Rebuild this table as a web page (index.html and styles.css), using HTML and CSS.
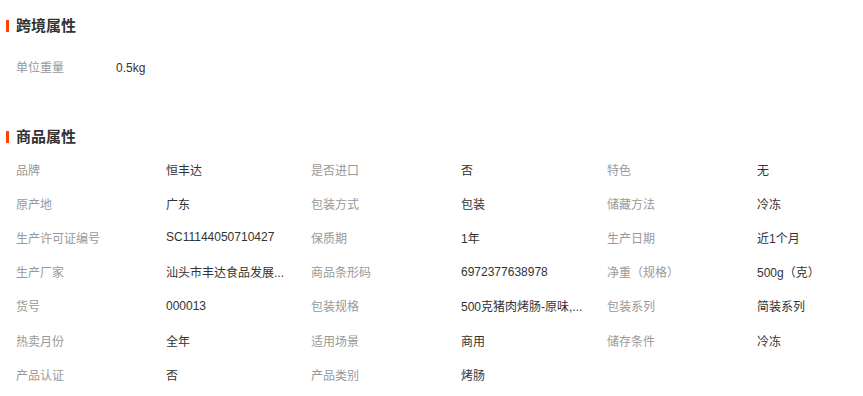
FILE: index.html
```html
<!DOCTYPE html>
<html lang="zh-CN">
<head>
<meta charset="utf-8">
<title>属性</title>
<link rel="stylesheet" href="styles.css">
</head>
<body>
<div class="page">
  <section class="block block-cross">
    <h2 class="title">跨境属性</h2>
    <div class="single-row">
      <span class="label">单位重量</span>
      <span class="value">0.5kg</span>
    </div>
  </section>
  <section class="block block-goods">
    <h2 class="title">商品属性</h2>
    <div class="attr-grid">
      <span class="label">品牌</span><span class="value">恒丰达</span>
      <span class="label">是否进口</span><span class="value">否</span>
      <span class="label">特色</span><span class="value">无</span>

      <span class="label">原产地</span><span class="value">广东</span>
      <span class="label">包装方式</span><span class="value">包装</span>
      <span class="label">储藏方法</span><span class="value">冷冻</span>

      <span class="label">生产许可证编号</span><span class="value">SC11144050710427</span>
      <span class="label">保质期</span><span class="value">1年</span>
      <span class="label">生产日期</span><span class="value">近1个月</span>

      <span class="label">生产厂家</span><span class="value" title="汕头市丰达食品发展有限公司">汕头市丰达食品发展...</span>
      <span class="label">商品条形码</span><span class="value">6972377638978</span>
      <span class="label">净重（规格）</span><span class="value">500g（克）</span>

      <span class="label">货号</span><span class="value">000013</span>
      <span class="label">包装规格</span><span class="value" title="500克猪肉烤肠-原味,黑椒味">500克猪肉烤肠-原味,...</span>
      <span class="label">包装系列</span><span class="value">简装系列</span>

      <span class="label">热卖月份</span><span class="value">全年</span>
      <span class="label">适用场景</span><span class="value">商用</span>
      <span class="label">储存条件</span><span class="value">冷冻</span>

      <span class="label">产品认证</span><span class="value">否</span>
      <span class="label">产品类别</span><span class="value">烤肠</span>
    </div>
  </section>
</div>
</body>
</html>
```

FILE: styles.css
```css
html, body {
  margin: 0;
  padding: 0;
  background: #fff;
}

.page {
  width: 863px;
  font-family: "Liberation Sans", "Noto Sans CJK SC", sans-serif;
  font-size: 12px;
  color: #333;
  padding-top: 16px;
}

.title {
  position: relative;
  margin: 0;
  height: 20px;
  line-height: 20px;
  padding-left: 16px;
  font-size: 15px;
  font-weight: bold;
  color: #333;
}

.title::before {
  content: "";
  position: absolute;
  left: 6px;
  top: 4px;
  width: 3px;
  height: 12px;
  background: #ff4400;
}

.single-row {
  display: flex;
  margin-top: 15px;
  height: 34px;
  line-height: 34px;
  padding-left: 16px;
}

.single-row .label {
  width: 100px;
}

.block-goods {
  margin-top: 42px;
}

.attr-grid {
  display: grid;
  grid-template-columns: 150px 145px 150px 146px 150px 100px;
  grid-auto-rows: 34.2px;
  align-items: center;
  margin-top: 5px;
  padding-left: 16px;
}

.label {
  color: #999;
  white-space: nowrap;
}

.value {
  color: #333;
  white-space: nowrap;
}
```
